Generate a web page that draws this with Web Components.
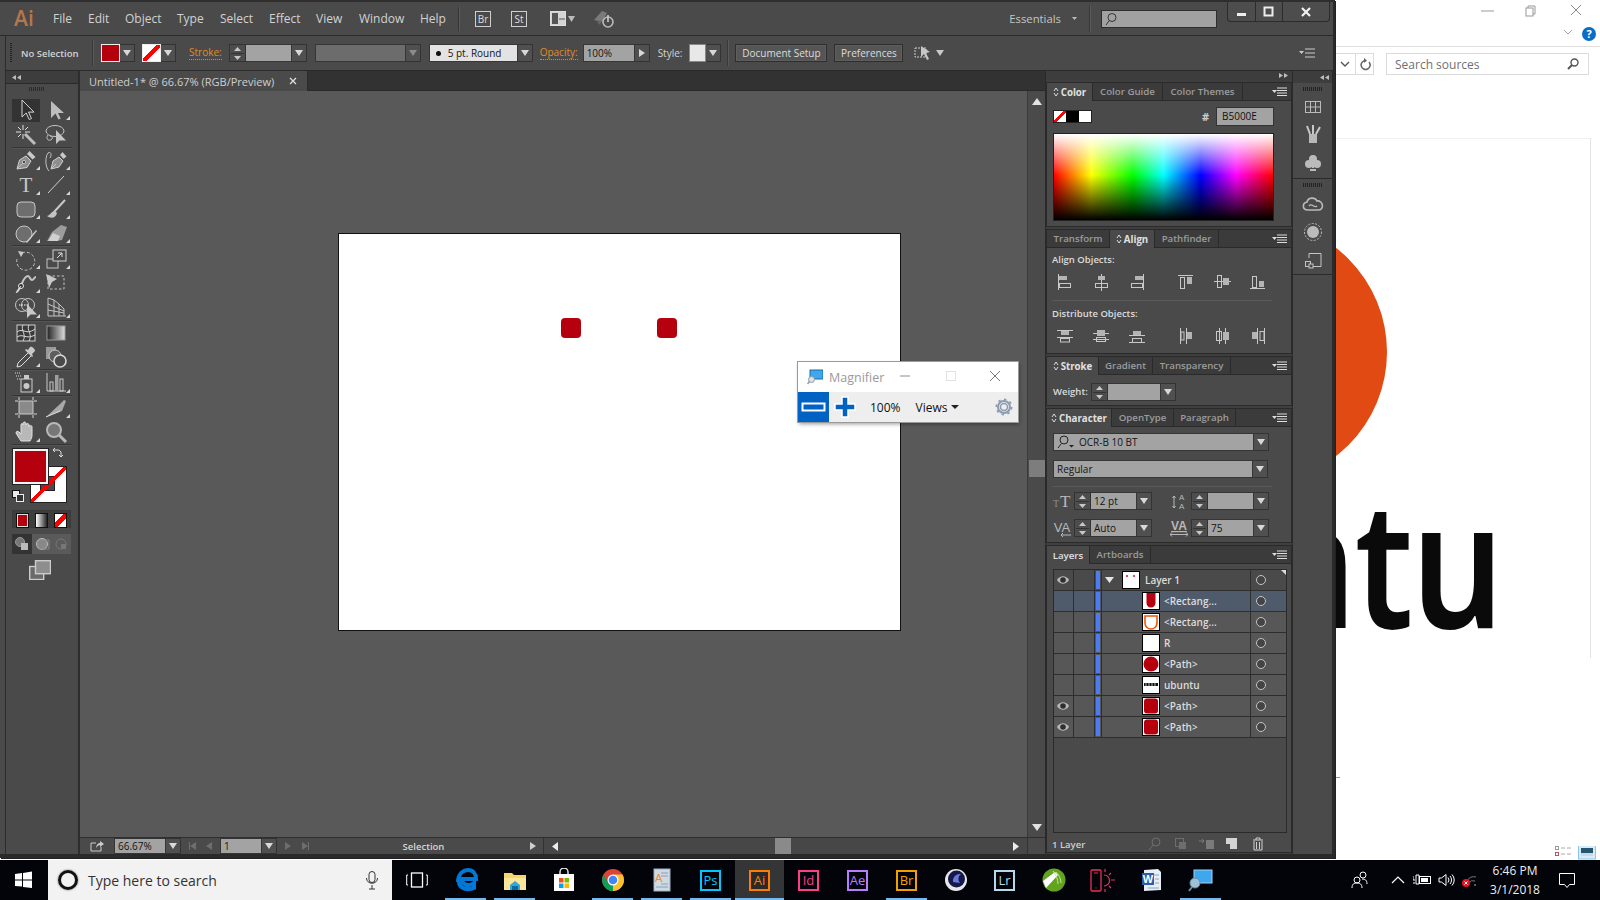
<!DOCTYPE html>
<html>
<head>
<meta charset="utf-8">
<title>Illustrator</title>
<style>
  html, body { margin: 0; height: 100%; }
  body { width: 1600px; height: 900px; overflow: hidden; display: flex; flex-direction: column; font-family: "Open Sans", "Liberation Sans", sans-serif; background: #fff; }
</style>
</head>
<body>
<desk-top>
  <browser-behind></browser-behind>
  <ai-app></ai-app>
</desk-top>
<task-bar></task-bar>

<script>
// small svg helpers
const tri = (dir, w = 8, h = 6, color = '#d8d8d8') => {
  const p = { d: `0,0 ${w},0 ${w / 2},${h}`, u: `0,${h} ${w},${h} ${w / 2},0`, r: `0,0 ${w},${h / 2} 0,${h}`, l: `${w},0 0,${h / 2} ${w},${h}` }[dir];
  return `<svg width="${w}" height="${h}" style="display:block"><polygon points="${p}" fill="${color}"/></svg>`;
};
const svg = (w, h, body, vb) => `<svg width="${w}" height="${h}" viewBox="${vb || `0 0 ${w} ${h}`}" fill="none" stroke="currentColor" stroke-width="1" style="display:block">${body}</svg>`;

const TOOLS = {
  sel: '<path d="M8 2v17l4.2-4 3 6.5 2.3-1-3-6.4H20z" fill="#2f2f2f" stroke="#d4d4d4"/>',
  dsel: '<path d="M7 3v17l4.5-4.5 3 6 2.2-1-2.7-5.5H20z" fill="#bdbdbd" stroke="none"/>',
  wand: '<path d="M11 11l10 10" stroke-width="3" stroke="#bdbdbd"/><path d="M9 2v5M9 11v5M2 9h5M11 9h5M4 4l3 3M14 4l-3 3M4 14l3-3" stroke="#e0e0e0"/>',
  lasso: '<ellipse cx="11" cy="8" rx="9" ry="5.5"/><path d="M4 12c-3 4 1 7 4 4 1-1 0-3-2-3"/><path d="M12 7v14l3.5-3.5H22z" fill="#c4c4c4" stroke="none"/>',
  pen: '<path d="M3 21l2.500-9 6.500-4 5 5-4 6.500z" fill="#8e8e8e" stroke="#cfcfcf"/><path d="M3 21l6-6"/><circle cx="10" cy="14" r="1.600" fill="#333"/><path d="M13 6l2.500-3 6 6-3 2.500z" fill="#c8c8c8" stroke="none"/>',
  curv: '<path d="M7 21l2-8 6-4 4 4-4 6z" fill="#8e8e8e" stroke="#cfcfcf"/><path d="M7 21l5-5"/><path d="M16 7l2.500-3 4 4.500-3 2.500z" fill="#c8c8c8" stroke="none"/><path d="M5 23C1 19 1 9 4 5c3-2 4 2 2 5"/>',
  type: '<text x="12" y="20" text-anchor="middle" font-family="Liberation Serif" font-size="21" fill="#c8c8c8" stroke="none">T</text>',
  line: '<path d="M4 21L20 4" stroke="#d0d0d0"/>',
  rect: '<rect x="3" y="5" width="18" height="15" rx="4" fill="#6e6e6e" stroke="#c8c8c8"/>',
  brush: '<path d="M21 3L10 15" stroke="#c8c8c8" stroke-width="2"/><path d="M11 14c-4 0-4 4-8 5 4 3 9 2 10-3z" fill="#c4c4c4" stroke="none"/>',
  shaper: '<circle cx="10" cy="13" r="8" fill="#6e6e6e" stroke="#c8c8c8"/><path d="M12 21L22 9l1 1L13 22z" fill="#c8c8c8" stroke="none"/>',
  eraser: '<path d="M3 20l5-9 9-7 6 2-5 13-6 1z" fill="#9c9c9c" stroke="none"/><path d="M9 12l7 3-2 5H4z" fill="#d0d0d0" stroke="none"/>',
  rotate: '<path d="M8 6a9 9 0 1 1-5 6" stroke-dasharray="3 2"/><path d="M4 4l6 1-3 5z" fill="#c8c8c8" stroke="none"/>',
  scale: '<rect x="3" y="12" width="11" height="9"/><rect x="9" y="3" width="13" height="11" fill="#4a4a4a" stroke="#d0d0d0"/><path d="M13 11l5-5M14 6h4v4" stroke="#e0e0e0"/>',
  width: '<path d="M3 21C9 15 8 6 14 5c2 0 2 4 4 4s2-3 4-3" stroke-width="2"/><circle cx="7" cy="15" r="2.500" fill="#333" stroke="#e8e8e8"/><path d="M2 22l5-7" stroke="#e8e8e8"/>',
  free: '<path d="M4 5h16v13H4z" stroke-dasharray="2.500 2"/><path d="M2 3l11 5-5 3 -3 6z" fill="#c8c8c8" stroke="none"/>',
  build: '<circle cx="8" cy="10" r="6.500"/><circle cx="14" cy="10" r="6.500"/><path d="M5 10h9" stroke="#fff" stroke-dasharray="1.500 1"/><path d="M13 9v14l3.500-3.500H23z" fill="#c8c8c8" stroke="none"/>',
  persp: '<path d="M4 3v18h18M4 3l6 2v16M10 5l5 4v12M15 9l5 5v7" stroke="#c4c4c4"/><path d="M4 9l16 7M4 15l16 3" stroke="#c4c4c4"/>',
  mesh: '<rect x="3" y="4" width="18" height="16" fill="#3a3a3a" stroke="#d0d0d0"/><path d="M3 11c6-5 9 4 18-3M3 16c6-4 9 3 18-2M9 4c-3 5 4 9 0 16M15 4c-3 5 4 9 0 16" stroke="#d8d8d8"/>',
  grad: '<defs><linearGradient id="g1"><stop offset="0" stop-color="#222"/><stop offset="1" stop-color="#ddd"/></linearGradient></defs><rect x="3" y="5" width="18" height="14" fill="url(#g1)" stroke="#999"/>',
  drop: '<path d="M3 22l1-4L15 7l3 3L7 21z" fill="#4a4a4a" stroke="#e0e0e0"/><path d="M14 5l2-3c2-1 5 2 5 4l-3 3 1 2-1 1-7-7 1-1z" fill="#c8c8c8" stroke="none"/>',
  blend: '<rect x="2" y="2" width="10" height="12" fill="#9a9a9a" stroke="none"/><circle cx="11" cy="11" r="6" fill="#5e5e5e" stroke="#c8c8c8"/><circle cx="16" cy="16" r="6" fill="#4a4a4a" stroke="#d8d8d8" stroke-width="1.600"/>',
  spray: '<rect x="7" y="9" width="11" height="13" fill="#4a4a4a" stroke="#d0d0d0"/><circle cx="12.500" cy="16" r="3" fill="#c8c8c8" stroke="none"/><rect x="10" y="5" width="5" height="4" fill="#c8c8c8" stroke="none"/><path d="M1 3h5M2 6h5M3 9h3" stroke-dasharray="1 1" stroke="#ddd"/>',
  graph: '<path d="M3 3v18h19" stroke="#c8c8c8"/><rect x="6" y="12" width="3" height="9" stroke="#c8c8c8"/><rect x="11" y="5" width="3.500" height="16" fill="#9e9e9e" stroke="none"/><rect x="16" y="9" width="3" height="12" stroke="#c8c8c8"/>',
  board: '<rect x="5" y="5" width="14" height="13" fill="#8a8a8a" stroke="#c8c8c8"/><path d="M1 5h3M20 5h3M1 18h3M20 18h3M5 1v3M19 1v3M5 19v3M19 19v3" stroke="#d8d8d8"/>',
  slice: '<path d="M2 21L15 9l5-5 2 1-4 10z" fill="#a8a8a8" stroke="none"/><path d="M2 21l14-6" stroke="#d8d8d8"/>',
  hand: '<path d="M7 21c-2-3-4-6-5-8 0-2 2-2 3-1l2 2V5c0-2 2-2 2 0V3.500c0-2 3-2 3 0V5c0-2 3-2 3 0v2c0-2 3-2 3 0v8c0 3-1 4-2 6z" fill="#b8b8b8" stroke="#e0e0e0"/>',
  zoom: '<circle cx="10" cy="10" r="7" fill="#777" stroke="#b8b8b8" stroke-width="2"/><path d="M15 15l7 7" stroke="#b8b8b8" stroke-width="3"/>'
};

class Comp extends HTMLElement {
  connectedCallback() {
    if (this.shadowRoot) return;
    this.attachShadow({ mode: 'open' });
    this.shadowRoot.innerHTML = this.render();
  }
}

class DeskTop extends Comp {
  render() {
    return `<style>:host{display:block;position:relative;height:860px;overflow:hidden}</style><slot></slot>`;
  }
}

class BrowserBehind extends Comp {
  render() {
    return `<style>
      :host{position:absolute;inset:0;display:block;background:#fff;overflow:hidden;color:#6a6a6a}
      .circle{position:absolute;left:1123px;top:220px;width:264px;height:264px;border-radius:50%;background:#e24a14}
      .clip{position:absolute;left:1335px;right:98px;top:441px;height:239px;overflow:hidden;display:flex;justify-content:flex-end}
      .word{flex:none;font:600 176px/1.36 "Noto Sans",sans-serif;color:#0a0a0a;letter-spacing:-2px;transform:scaleX(.82);transform-origin:right center}
      .top{position:absolute;left:1335px;right:0;top:0;height:46px;border-bottom:1px solid #e0e0e0}
      .wb{position:absolute;top:3px}
      .addr{position:absolute;left:1335px;top:53px;width:38px;height:20px;border:1px solid #dcdcdc;border-left:0;display:flex}
      .addr div{flex:1;display:flex;align-items:center;justify-content:center}
      .addr div+div{width:17px;flex:none;border-left:1px solid #dcdcdc}
      .search{position:absolute;left:1386px;top:53px;height:20px;border:1px solid #dcdcdc;display:flex;align-items:center;justify-content:space-between;padding:0 8px;box-sizing:content-box;width:185px;font:12px "Open Sans",sans-serif;color:#707070}
      .vl{position:absolute;left:1590px;top:138px;height:520px;width:1px;background:#e4e4e4}
      .hl{position:absolute;left:1335px;top:138px;width:255px;height:1px;background:#f1f1f1}
      .mk{position:absolute;left:1336px;top:777px;width:4px;height:1px;background:#999}
      .views{position:absolute;left:1555px;top:846px;display:flex;gap:7px;align-items:flex-start}
    </style>
    <div class="circle"></div>
    <div class="clip"><div class="word">ntu</div></div>
    <div class="top">
      <div class="wb" style="left:143px">${svg(16, 16, '<path d="M3 8h13" stroke="#999"/>')}</div>
      <div class="wb" style="left:187px">${svg(16, 16, '<rect x="4" y="5" width="7" height="8" stroke="#999"/><path d="M6 5V3h7v8h-2" stroke="#999"/>')}</div>
      <div class="wb" style="left:233px">${svg(16, 16, '<path d="M3 2l10 10M13 2L3 12" stroke="#888"/>')}</div>
      <div class="wb" style="left:226px;top:28px">${svg(14, 10, '<path d="M3 2l4 4 4-4" stroke="#aaa"/>')}</div>
      <div class="wb" style="left:247px;top:27px;width:14px;height:14px;border-radius:50%;background:#0a6cc4;color:#fff;font:bold 11px/14px 'Open Sans',sans-serif;text-align:center">?</div>
    </div>
    <div class="addr"><div>${svg(12, 8, '<path d="M2 2l4 4 4-4" stroke="#555" stroke-width="1.400"/>')}</div><div>${svg(14, 14, '<path d="M11 5a4.500 4.500 0 1 1-3-1.500" stroke="#666" stroke-width="1.500"/><path d="M6 1l3 2.500L6 6z" fill="#666" stroke="none"/>')}</div></div>
    <div class="search"><span>Search sources</span>${svg(14, 14, '<circle cx="8.500" cy="5.500" r="3.500" stroke="#555" stroke-width="1.400"/><path d="M6 8l-4 4" stroke="#555" stroke-width="2"/>')}</div>
    <div class="hl"></div><div class="vl"></div><div class="mk"></div>
    <div class="views">${svg(16, 10, '<rect x="0.500" y="0.500" width="3" height="3" stroke="#999"/><rect x="0.500" y="6.500" width="3" height="3" stroke="#b55"/><path d="M6 2h4M12 2h4M6 8h4M12 8h4" stroke="#aaa"/>')}
      <svg width="18" height="14" style="display:block"><rect x="0.500" y="-4" width="17" height="17" fill="#d6ecfa" stroke="#8ac6ec"/><rect x="3" y="2" width="12" height="8" fill="#25566f"/><rect x="3" y="7" width="12" height="3" fill="#cfd8df"/></svg></div>`;
  }
}

class AiApp extends Comp {
  render() {
    return `<style>
      :host{position:absolute;left:0;top:0;width:1335px;height:858px;display:flex;flex-direction:column;background:#4a4a4a;box-sizing:border-box;border-top:2px solid #2e2e2e;border-right:2px solid #2a2a2a;border-bottom:4px solid #2a2a2a;box-shadow:1px 1px 0 #222;color:#d6d6d6;font-size:11px}
      .main{flex:1;min-height:0;display:flex;margin-left:5px;border-left:1px solid #2c2c2c;border-top:1px solid #2a2a2a}
    </style>
    <menu-bar></menu-bar>
    <control-bar></control-bar>
    <div class="main">
      <tool-dock></tool-dock>
      <doc-area></doc-area>
      <panel-dock></panel-dock>
      <icon-dock></icon-dock>
    </div>`;
  }
}

class MenuBar extends Comp {
  render() {
    const items = ['File', 'Edit', 'Object', 'Type', 'Select', 'Effect', 'View', 'Window', 'Help'];
    // column widths come from the reference's label positions
    return `<style>
      :host{display:flex;align-items:center;height:34px;box-sizing:border-box;flex:none;border-bottom:1px solid #2a2a2a;font-size:12px;color:#d2d2d2;padding-left:14px}
      .logo{width:39px;font:600 21px/1 "Open Sans",sans-serif;color:#b4764d}
      nav{display:grid;grid-template-columns:35px 37px 52px 43px 49px 47px 43px 61px 39px}
      .sep{width:1px;height:24px;background:#363636;border-right:1px solid #5a5a5a;margin:0 15px 0 0}
      .bx{width:16px;height:16px;border:1px solid #cfcfcf;box-sizing:border-box;font:10px/14px "Open Sans",sans-serif;text-align:center;color:#ddd;margin-right:20px}
      .ess{margin-left:auto;display:flex;align-items:center;font-size:11.300px;color:#c4c4c4}
      .vs{width:1px;height:26px;background:#383838;border-right:1px solid #5a5a5a}
      .search{width:116px;height:18px;box-sizing:border-box;background:#a1a1a1;border:1px solid #2e2e2e;margin:0 10px 0 10px;padding:1px 0 0 2px;color:#333}
      .win{display:flex;align-self:flex-start;height:19px;margin-right:3px;margin-top:0;border:1px solid #2c2c2c;border-top:0;border-radius:0 0 4px 4px;background:#4d4d4d}
      .win div{display:flex;align-items:center;justify-content:center;border-left:1px solid #2c2c2c;color:#eee}
    </style>
    <div class="logo">Ai</div>
    <nav>${items.map(i => `<span>${i}</span>`).join('')}</nav>
    <div class="sep" style="margin-left:-1px"></div>
    <div class="bx">Br</div><div class="bx">St</div>
    <div style="display:flex;align-items:center;gap:2px;margin:0 17px 0 3px">
      ${svg(16, 15, '<rect x="0.500" y="0.500" width="15" height="14" fill="#d4d4d4" stroke="#ddd"/><rect x="2" y="2" width="6" height="11" fill="#555" stroke="none"/><path d="M9 8h6" stroke="#555"/>')}
      ${tri('d', 7, 6, '#bbb')}
    </div>
    ${svg(24, 20, '<path d="M2 11l8-9 5 2-5 9z" fill="#7a7a7a" stroke="none"/><path d="M5 13l5-2-2 5z" fill="#666" stroke="none"/><circle cx="16" cy="13" r="5" stroke="#bbb" stroke-width="1.600"/><path d="M16 6v7" stroke="#ccc" stroke-width="1.600"/>')}
    <div class="ess"><span style="margin-right:11px">Essentials</span>${tri('d', 5, 3, '#bbb')}<span style="width:12px"></span></div>
    <div class="vs"></div>
    <div class="search">${svg(14, 14, '<circle cx="8" cy="5.500" r="4"/><path d="M5 9l-3 4"/>')}</div>
    <div class="win">
      <div style="width:27px;border-left:0">${svg(12, 12, '<rect x="1" y="7" width="9" height="3" fill="#eee" stroke="none"/>')}</div>
      <div style="width:26px">${svg(12, 12, '<rect x="1.500" y="1.500" width="8" height="8" stroke="#eee" stroke-width="2"/>')}</div>
      <div style="width:46px">${svg(12, 12, '<path d="M2 2l8 8M10 2l-8 8" stroke="#f2f2f2" stroke-width="2.200"/>')}</div>
    </div>`;
  }
}

class AiField extends Comp {
  render() {
    const a = n => this.getAttribute(n);
    const has = n => this.hasAttribute(n);
    const fw = a('fw') || 46;
    const dis = has('disabled');
    const arrow = a('arrow') || 'd';
    return `<style>
      :host{display:inline-flex;height:18px;flex:none;box-sizing:border-box;font-size:10px;color:#141414;vertical-align:top}
      .spin{width:17px;box-sizing:border-box;border:1px solid #333;background:#4d4d4d;display:flex;flex-direction:column;align-items:center;justify-content:center;gap:2px}
      .spin i{display:block;height:1px;width:13px;background:#333;margin:0}
      .f{width:${fw}px;box-sizing:border-box;background:${dis ? '#6c6c6c' : has('light') ? '#e3e3e3' : '#a3a3a3'};border:1px solid #363636;border-width:${has('spin') ? '1px 1px 1px 0' : '1px'};padding-left:3px;line-height:16px;white-space:nowrap;overflow:hidden;display:flex;align-items:center}
      .d{width:15px;box-sizing:border-box;background:#505050;border:1px solid #333;border-left:0;display:flex;align-items:center;justify-content:center}
    </style>
    ${has('spin') ? `<div class="spin">${tri('u', 7, 4, '#c8c8c8')}<i></i>${tri('d', 7, 4, '#c8c8c8')}</div>` : ''}
    <div class="f"><slot></slot></div>
    ${has('nodrop') ? '' : `<div class="d">${tri(arrow === 'r' ? 'r' : 'd', arrow === 'r' ? 6 : 8, arrow === 'r' ? 8 : 6, dis ? '#8c8c8c' : '#d8d8d8')}</div>`}`;
  }
}

class ControlBar extends Comp {
  render() {
    return `<style>
      :host{display:flex;align-items:center;height:34px;flex:none;margin-left:5px;border-left:1px solid #2c2c2c;box-sizing:border-box;font-size:10px;color:#d4d4d4}
      .grip{width:2px;height:20px;margin:0 9px 0 4px;background:repeating-linear-gradient(#222 0 1px,transparent 1px 2px)}
      .sep{width:1px;height:26px;background:#393939;border-right:1px solid #5a5a5a}
      .sw{display:flex;height:18px;flex:none}
      .sw .c{width:19px;box-sizing:border-box;border:1px solid #eee;background:#b5000e;outline:0}
      .sw .d{width:15px;background:#505050;border:1px solid #333;border-left:0;box-sizing:border-box;display:flex;align-items:center;justify-content:center}
      .lab{color:#e08a2c;border-bottom:1px dotted #e08a2c;line-height:13px;flex:none}
      button{all:unset;box-sizing:border-box;height:18px;flex:none;text-align:center;background:#555;border:1px solid #2e2e2e;box-shadow:inset 0 0 0 1px #5e5e5e;font-size:10px;line-height:16px;color:#dcdcdc}
      .m{margin-left:auto;margin-right:18px}
    </style>
    <div class="grip"></div>
    <span style="width:71px;font-weight:600;font-size:9.500px">No Selection</span>
    <div class="sep"></div>
    <div class="sw" style="margin-left:7px"><div class="c"></div><div class="d">${tri('d', 8, 6)}</div></div>
    <div class="sw" style="margin-left:7px"><div class="c" style="background:linear-gradient(135deg,#fff 0 42%,#f00 42% 58%,#fff 58%)"></div><div class="d">${tri('d', 8, 6)}</div></div>
    <span class="lab" style="margin:0 7px 0 13px">Stroke:</span>
    <ai-field spin fw="46"></ai-field>
    <ai-field disabled fw="91" style="margin-left:8px"></ai-field>
    <ai-field light fw="89" style="margin-left:8px"><span style="width:5px;height:5px;border-radius:50%;background:#111;margin:0 7px 0 3px"></span>5 pt. Round</ai-field>
    <span class="lab" style="margin:0 5px 0 7px">Opacity:</span>
    <ai-field fw="52" arrow="r">100%</ai-field>
    <span style="margin:0 7px 0 8px">Style:</span>
    <div class="sw"><div class="c" style="width:17px;background:#e8e8e8;border-color:#888"></div><div class="d">${tri('d', 8, 6)}</div></div>
    <div class="sep" style="margin:0 6px"></div>
    <button style="width:92px">Document Setup</button>
    <button style="width:69px;margin-left:7px">Preferences</button>
    <div style="margin-left:11px;display:flex;align-items:center;gap:4px">
      ${svg(18, 16, '<rect x="1" y="3" width="11" height="9" stroke-dasharray="2 1" stroke="#ccc"/><path d="M7 1l9 6-4 1 3 6-2 1-3-6-3 3z" fill="#c6c6c6" stroke="none"/>')}
      ${tri('d', 8, 6, '#c8c8c8')}
    </div>
    <div class="m">${svg(16, 10, '<path d="M6 1h10M6 5h10M6 9h10" stroke="#ccc"/><path d="M0 3h5L2.500 6z" fill="#ccc" stroke="none"/>')}</div>`;
  }
}

class ToolBtn extends Comp {
  render() {
    const n = this.getAttribute('n');
    return `<style>
      :host{position:relative;display:flex;width:30px;height:24.400px;align-items:center;justify-content:center;color:#c4c4c4}
      :host([on]) .box{background:#333}
      .box{width:28px;height:23px;display:flex;align-items:center;justify-content:center}
      .c{position:absolute;right:1px;bottom:2px}
    </style>
    <div class="box">${svg(24, 24, TOOLS[n])}</div>
    ${this.hasAttribute('m') ? `<div class="c">${svg(4, 4, '<polygon points="4,0 4,4 0,4" fill="#d8d8d8" stroke="none"/>')}</div>` : ''}`;
  }
}

class ToolDock extends Comp {
  render() {
    const grp = (rows) => `<div class="g">${rows.map(r => `<tool-btn n="${r}"></tool-btn>`.replace(/n="([a-z]+)(\*?)(\+?)"/, (m, a, b, c) => `n="${a}"${b ? ' m' : ''}${c ? ' on' : ''}`)).join('')}</div>`;
    return `<style>
      :host{display:flex;flex-direction:column;width:72px;flex:none;border-right:2px solid #2d2d2d;box-sizing:content-box}
      .hd{height:12px;background:#3d3d3d;border-bottom:1px solid #2a2a2a;padding-left:6px;display:flex;align-items:center;gap:1px;flex:none}
      .grip{height:4px;width:16px;margin:3px 0 7px 23px;background:repeating-linear-gradient(90deg,#2a2a2a 0 1px,transparent 1px 2px);flex:none}
      .g{display:grid;grid-template-columns:30px 30px;padding-left:5px;flex:none}
      hr{border:0;height:1px;margin:0 4px 0 6px;background:#363636;flex:none;box-shadow:0 1px 0 #555;width:60px}
      .fs{position:relative;height:54px;margin:4px 0 0 7px;width:60px;flex:none}
      .fill{position:absolute;left:0;top:0;width:35px;height:35px;box-sizing:border-box;background:#b5000e;border:2px solid #f4f4f4;outline:1px solid #222;z-index:1}
      .stroke{position:absolute;left:18px;top:18px;width:35px;height:35px;box-sizing:border-box;background:linear-gradient(135deg,transparent 0 47%,#f00 47% 53%,transparent 53%),#fff;outline:1px solid #222}
      .stroke i{position:absolute;left:10px;top:10px;width:13px;height:13px;background:#4a4a4a;outline:1px solid #222}
      .stroke b{position:absolute;inset:0;background:linear-gradient(135deg,transparent 0 47%,#f00 47% 53%,transparent 53%)}
      .sw{position:absolute;left:38px;top:-2px;color:#ddd}
      .df{position:absolute;left:-1px;top:41px}
      .modes{display:flex;margin:7px 0 0 6px;width:59px;height:18px;background:#3d3d3d;flex:none;gap:6px;padding:2px 3px;box-sizing:border-box;border:1px solid #3a3a3a}
      .modes i{display:block;width:13px;height:13px;border:1px solid #111;box-sizing:content-box}
      .draw{display:flex;margin:6px 0 0 6px;width:59px;height:20px;flex:none;background:#5a5a5a}
      .draw div{flex:1;display:flex;align-items:center;justify-content:center}
      .scr{margin:6px 0 0 23px;flex:none}
    </style>
    <div class="hd">${tri('l', 4, 5, '#bdbdbd')}${tri('l', 4, 5, '#bdbdbd')}</div>
    <div class="grip"></div>
    ${grp(['sel+', 'dsel*', 'wand', 'lasso'])}<hr>
    ${grp(['pen*', 'curv*', 'type*', 'line*', 'rect*', 'brush*', 'shaper*', 'eraser*'])}<hr>
    ${grp(['rotate*', 'scale*', 'width*', 'free', 'build*', 'persp*'])}<hr>
    ${grp(['mesh', 'grad', 'drop*', 'blend'])}<hr>
    ${grp(['spray*', 'graph*'])}<hr>
    ${grp(['board', 'slice*', 'hand*', 'zoom'])}<hr>
    <div class="fs">
      <div class="stroke"><i></i><b></b></div>
      <div class="fill"></div>
      <div class="sw">${svg(12, 12, '<path d="M2 3h6l2 2v5M2 3l2-2M2 3l2 2M10 10l-2-2M10 10l2-2" stroke="#ddd"/>')}</div>
      <div class="df">${svg(12, 12, '<rect x="0.500" y="0.500" width="7" height="7" fill="#e8e8e8" stroke="#111"/><rect x="4.500" y="4.500" width="7" height="7" fill="#333" stroke="#eee"/>')}</div>
    </div>
    <div class="modes"><i style="background:#b5000e;outline:1px solid #ddd;outline-offset:-2px"></i><i style="background:linear-gradient(90deg,#fff,#222)"></i><i style="background:linear-gradient(135deg,#fff 0 35%,#f00 35% 65%,#fff 65%)"></i></div>
    <div class="draw">
      <div style="background:#333">${svg(16, 16, '<circle cx="6" cy="6" r="4.500" stroke="#999" fill="#777"/><rect x="7" y="7" width="7" height="7" fill="#bbb" stroke="none"/>')}</div>
      <div>${svg(16, 16, '<circle cx="8" cy="8" r="5.500" stroke="#bbb" fill="#888"/><path d="M11 4h4v9h-9v-2" stroke="#888"/>')}</div>
      <div>${svg(16, 16, '<circle cx="8" cy="8" r="5" stroke="#777"/><rect x="8" y="8" width="5" height="5" fill="#777" stroke="none"/>')}</div>
    </div>
    <div class="scr">${svg(22, 20, '<rect x="0.700" y="6.500" width="14" height="13" stroke="#ccc" stroke-width="1.400" fill="#6a6a6a"/><rect x="6.500" y="0.700" width="15" height="13" stroke="#ccc" stroke-width="1.400" fill="#8e8e8e"/>')}</div>`;
  }
}

class DocArea extends Comp {
  render() {
    return `<style>
      :host{flex:1;min-width:0;display:flex;flex-direction:column;border-right:1px solid #2a2a2a}
      .tabs{height:19px;flex:none;background:#323232;display:flex;border-bottom:1px solid #2a2a2a}
      .tab{width:228px;box-sizing:border-box;background:#4a4a4a;display:flex;align-items:center;padding:0 10px 0 9px;justify-content:space-between;font-size:11px;font-weight:500;color:#cfcfcf;border-right:1px solid #2a2a2a;height:20px}
      .mid{flex:1;min-height:0;display:flex}
      .vs{width:17px;flex:none;border-left:1px solid #3a3a3a;background:#4a4a4a;display:flex;flex-direction:column;align-items:center;justify-content:space-between;padding:7px 0 6px}
      .thumb{position:absolute;right:0;top:369px;width:16px;height:17px;background:#7d7d7d}
      .st{height:16px;flex:none;border-top:1px solid #2e2e2e;display:flex;align-items:center;background:#4a4a4a;font-size:10px}
      .st ai-field{height:16px}
      .nav{display:flex;align-items:center;justify-content:center;gap:3px}
      .sel{width:213px;flex:none;text-align:center;color:#d6d6d6;font-size:9.500px;font-weight:600}
      .hs{flex:1;margin:0 17px 0 7px;height:100%;position:relative;background:#474747;border-left:1px solid #333;border-right:1px solid #333;display:flex;align-items:center;justify-content:space-between;padding:0 8px 0 8px;box-sizing:border-box}
      .ht{position:absolute;left:231px;top:0;bottom:0;width:16px;background:#8a8a8a}
    </style>
    <div class="tabs"><div class="tab"><span>Untitled-1* @ 66.67% (RGB/Preview)</span>${svg(8, 8, '<path d="M1 1l6 6M7 1L1 7" stroke="#ddd" stroke-width="1.300"/>')}</div></div>
    <div class="mid">
      <art-canvas></art-canvas>
      <div class="vs" style="position:relative">${tri('u', 10, 7, '#e2e2e2')}<div class="thumb"></div>${tri('d', 10, 7, '#e2e2e2')}</div>
    </div>
    <div class="st">
      <div style="width:34px;display:flex;justify-content:center">${svg(14, 12, '<path d="M1 3h5M1 3v8h10V7" stroke="#ccc"/><path d="M6 8c0-3 2-5 4-5V1l4 3-4 3V5c-1 0-3 1-4 3z" fill="#ccc" stroke="none"/>')}</div>
      <ai-field fw="52">66.67%</ai-field>
      <div class="nav" style="width:39px;gap:2px">${svg(7, 8, '<path d="M0.500 0v8" stroke="#6e6e6e"/><polygon points="7,0 1,4 7,8" fill="#6e6e6e" stroke="none"/>')}<span style="width:6px"></span>${tri('l', 6, 8, '#6e6e6e')}</div>
      <ai-field fw="42">1</ai-field>
      <div class="nav" style="width:40px">${tri('r', 6, 8, '#6e6e6e')}<span style="width:5px"></span>${svg(7, 8, '<path d="M6.500 0v8" stroke="#6e6e6e"/><polygon points="0,0 6,4 0,8" fill="#6e6e6e" stroke="none"/>')}</div>
      <div class="sel">Selection</div>
      ${tri('r', 6, 8, '#d0d0d0')}
      <div class="hs">${tri('l', 6, 9, '#ececec')}<div class="ht"></div>${tri('r', 6, 9, '#ececec')}</div>
    </div>`;
  }
}

class ArtCanvas extends Comp {
  render() {
    return `<style>
      :host{flex:1;min-width:0;position:relative;display:block;background:#595959;overflow:hidden}
      .board{position:absolute;left:259px;top:143px;width:561px;height:396px;background:#fff;outline:1px solid #111}
      .dot{position:absolute;top:84px;width:20px;height:20px;border-radius:4px;background:#b5000e}
    </style>
    <div class="board"><div class="dot" style="left:222px"></div><div class="dot" style="left:318px"></div></div>
    <mag-window></mag-window>`;
  }
}

class MagWindow extends Comp {
  render() {
    return `<style>
      :host{position:absolute;left:718px;top:271px;width:220px;height:60px;background:#fff;box-shadow:0 0 0 1px #9a9a9a,1px 2px 4px rgba(0,0,0,.4);display:flex;flex-direction:column;z-index:5;font-size:12px;color:#111;font-family:"Open Sans",sans-serif}
      .title{height:30px;flex:none;display:flex;align-items:center;color:#9a9a9a;font-size:12.500px}
      .title .b{position:absolute;top:7px}
      .bar{flex:1;background:#eee;display:flex;align-items:center;position:relative}
      .minus{width:31px;height:100%;background:#0063c4;display:flex;align-items:center;justify-content:center}
    </style>
    <div class="title">
      <span style="margin:0 6px 0 9px">${svg(16, 16, '<rect x="3" y="1" width="13" height="9" fill="#3fa7ee" stroke="#1d6da6"/><circle cx="4.500" cy="10.500" r="3" stroke="#8d9aa3" fill="#d8e4ec"/><path d="M2.500 12.500L0.500 15" stroke="#8d9aa3" stroke-width="1.500"/>')}</span>
      <span>Magnifier</span>
      <div class="b" style="left:100px">${svg(14, 14, '<path d="M2 7h10" stroke="#8c8c8c"/>')}</div>
      <div class="b" style="left:146px">${svg(14, 14, '<rect x="2.500" y="2.500" width="9" height="9" stroke="#e2e2e2"/>')}</div>
      <div class="b" style="left:190px">${svg(14, 14, '<path d="M2 2l10 10M12 2L2 12" stroke="#777"/>')}</div>
    </div>
    <div class="bar">
      <div class="minus">${svg(25, 10, '<rect x="1.500" y="1.500" width="22" height="7" fill="#0063c4" stroke="#fff" stroke-width="2"/>')}</div>
      <span style="margin:0 0 0 4px;display:block">${svg(24, 24, '<path d="M9 2h6v7h7v6h-7v7H9v-7H2V9h7z" fill="#0063c4" stroke="#fff" stroke-width="1.500"/>')}</span>
      <span style="margin-left:13px">100%</span>
      <span style="margin-left:15px">Views</span>
      <span style="margin-left:4px">${tri('d', 8, 4, '#222')}</span>
      <span style="margin-left:auto;margin-right:5px">${svg(18, 18, '<circle cx="9" cy="9" r="3.500" stroke="#8a9bb0" stroke-width="1.500"/><circle cx="9" cy="9" r="6" stroke="#8a9bb0" stroke-width="2"/><circle cx="9" cy="9" r="7.700" stroke="#8a9bb0" stroke-width="1.600" stroke-dasharray="2.500 3.500"/>')}</span>
    </div>`;
  }
}

class AiPanel extends Comp {
  render() {
    const tabs = this.getAttribute('tabs').split('|');
    const widths = this.getAttribute('widths').split(',');
    const act = +(this.getAttribute('active') || 0);
    const noArrow = this.hasAttribute('noarrow');
    return `<style>
      :host{display:block;flex:none;border:1px solid #2a2a2a;margin-top:2px;background:#4a4a4a;height:${this.getAttribute('h')}px;box-sizing:border-box;position:relative}
      .tabs{height:17px;display:flex;background:#3b3b3b;border-bottom:1px solid #2a2a2a;font-size:9.700px}
      .t{box-sizing:border-box;display:flex;align-items:center;justify-content:center;color:#9c9c9c;border-right:1px solid #2a2a2a;font-weight:600;white-space:nowrap;gap:2px}
      .t.a{background:#4a4a4a;color:#e0e0e0;height:18px;font-weight:${noArrow ? 600 : 700}}
      .menu{margin-left:auto;margin-right:4px;align-self:center}
    </style>
    <div class="tabs">
      ${tabs.map((t, i) => `<div class="t${i === act ? ' a' : ''}" style="width:${widths[i]}px">${i === act && !noArrow ? svg(6, 10, '<path d="M1 4l2-3 2 3M1 6l2 3 2-3" stroke="#ddd"/>') : ''}${t}</div>`).join('')}
      <div class="menu">${svg(15, 9, '<path d="M5 1h10M5 3.500h10M5 6h10M5 8.500h10" stroke="#ddd"/><path d="M0 3h5L2.500 6z" fill="#ddd" stroke="none"/>')}</div>
    </div>
    <div><slot></slot></div>`;
  }
}

class AlignRow extends Comp {
  render() {
    const L = 'stroke="#c8c8c8"', F = 'fill="#b4b4b4" stroke="none"';
    const sets = {
      align: [
        `<path d="M2.500 1v16" ${L}/><rect x="3" y="3" width="8" height="4" ${F}/><rect x="3.500" y="10.500" width="11" height="4" ${L}/>`,
        `<path d="M9.500 1v17" ${L}/><rect x="6" y="3" width="7" height="4" ${F}/><rect x="3.500" y="10.500" width="12" height="4" ${L}/>`,
        `<path d="M15.500 1v16" ${L}/><rect x="7" y="3" width="8" height="4" ${F}/><rect x="3.500" y="10.500" width="11" height="4" ${L}/>`,
        `<path d="M1 2.500h15" ${L}/><rect x="3.500" y="4.500" width="4" height="11" ${L}/><rect x="10" y="4" width="5" height="7" ${F}/>`,
        `<path d="M1 8.500h17" ${L}/><rect x="4.500" y="2.500" width="4" height="12" ${L}/><rect x="10" y="5" width="6" height="7" ${F}/>`,
        `<path d="M1 15.500h15" ${L}/><rect x="3.500" y="3.500" width="4" height="11" ${L}/><rect x="10" y="8" width="5" height="6" ${F}/>`
      ],
      dist: [
        `<path d="M1 3.500h16M1 10.500h16" ${L}/><rect x="5" y="4" width="8" height="4" ${F}/><rect x="4.500" y="11.500" width="9" height="3.500" ${L}/>`,
        `<path d="M1 6.500h16M1 12.500h16" ${L}/><rect x="5" y="3" width="8" height="6" ${F}/><rect x="4.500" y="10.500" width="9" height="4" ${L}/>`,
        `<path d="M1 8.500h16M1 15.500h16" ${L}/><rect x="5" y="4" width="8" height="4" ${F}/><rect x="4.500" y="11.500" width="9" height="4" ${L}/>`,
        `<path d="M3.500 1v16M9.500 1v16" ${L}/><rect x="4" y="5" width="3" height="8" ${L}/><rect x="10" y="5" width="5" height="7" ${F}/>`,
        `<path d="M6.500 1v16M12.500 1v16" ${L}/><rect x="3.500" y="4.500" width="5" height="9" ${L}/><rect x="10" y="5" width="6" height="8" ${F}/>`,
        `<path d="M8.500 1v16M15.500 1v16" ${L}/><rect x="3" y="5" width="5" height="7" ${F}/><rect x="11" y="4.500" width="4" height="9" ${L}/>`
      ]
    }[this.getAttribute('set')];
    return `<style>
      :host{display:grid;grid-template-columns:36px 36px 49px 36px 36px 36px;padding-left:9px;height:20px;align-items:center}
    </style>${sets.map(s => `<div>${svg(18, 18, s)}</div>`).join('')}`;
  }
}

class PanelDock extends Comp {
  render() {
    const spinDrop = (val, fw) => `<ai-field spin fw="${fw}">${val}</ai-field>`;
    return `<style>
      :host{width:246px;flex:none;display:flex;flex-direction:column;border-right:1px solid #2a2a2a;background:#3f3f3f;font-size:9.500px}
      .hd{height:9px;background:#3d3d3d;display:flex;justify-content:flex-end;align-items:center;gap:1px;padding-right:4px;flex:none}
      .sw{display:flex;border:1px solid #222;width:39px;height:13px;box-sizing:border-box}
      .sw i{flex:1}
      .cr{display:flex;align-items:center;justify-content:space-between;padding:6px 17px 0 6px}
      .hex{width:58px;height:19px;box-sizing:border-box;background:#a3a3a3;border:1px solid #333;color:#111;line-height:17px;padding-left:5px;font-size:10px}
      .spec{height:86px;margin:7px 17px 0 6px;border:1px solid #222;position:relative;background:linear-gradient(to bottom,#fff 0,rgba(255,255,255,0) 48%,rgba(0,0,0,0) 48%,#000 100%),linear-gradient(to right,#f00 0,#ff0 17%,#0f0 36%,#0ff 50%,#00f 67%,#f0f 83%,#f00 100%)}
      .lb{font-weight:600;padding:0 0 0 5px;line-height:14px;color:#dcdcdc}
      .sep{height:1px;background:#5a5a5a;margin:0 19px 0 5px}
      .ln{display:flex;align-items:center}
      .layers{margin:5px 4px 0 6px;height:264px;border:1px solid #2a2a2a;box-sizing:border-box;background:#4a4a4a}
      .ft{display:flex;align-items:center;height:20px;padding:0 0 0 5px;font-weight:600;color:#cfcfcf}
    </style>
    <div class="hd">${tri('r', 4, 5, '#bdbdbd')}${tri('r', 4, 5, '#bdbdbd')}</div>
    <ai-panel h="145" tabs="Color|Color Guide|Color Themes" widths="46,70,80">
      <div class="cr">
        <div class="sw"><i style="background:linear-gradient(135deg,#fff 0 40%,#f00 40% 60%,#fff 60%)"></i><i style="background:#000"></i><i style="background:#fff"></i></div>
        <div style="display:flex;align-items:center;gap:7px"><b style="font-size:11px;color:#ccc">#</b><div class="hex">B5000E</div></div>
      </div>
      <div class="spec"></div>
    </ai-panel>
    <ai-panel h="125" tabs="Transform|Align|Pathfinder" widths="63,45,64" active="1">
      <div class="lb" style="margin-top:5px">Align Objects:</div>
      <align-row set="align" style="margin-top:5px"></align-row>
      <div class="sep" style="margin-top:8px"></div>
      <div class="lb" style="margin-top:6px">Distribute Objects:</div>
      <align-row set="dist" style="margin-top:5px"></align-row>
    </ai-panel>
    <ai-panel h="50" tabs="Stroke|Gradient|Transparency" widths="52,54,78">
      <div class="ln" style="padding:8px 0 0 6px"><span class="lb" style="padding:0;width:38px">Weight:</span><ai-field spin fw="53"></ai-field></div>
    </ai-panel>
    <ai-panel h="135" tabs="Character|OpenType|Paragraph" widths="65,62,62">
      <ai-field fw="201" style="margin:6px 0 0 6px;display:flex"><span style="display:flex;align-items:center;color:#222;margin-right:4px">${svg(18, 14, '<circle cx="7" cy="5" r="4"/><path d="M4 9l-3 4"/><path d="M12 10h5l-2.500 2.500z" fill="#222" stroke="none"/>')}</span>OCR-B 10 BT</ai-field>
      <ai-field fw="200" style="margin:9px 0 0 6px;display:flex">Regular</ai-field>
      <div class="sep" style="margin-top:8px"></div>
      <div style="display:grid;grid-template-columns:117px auto;row-gap:9px;margin:5px 0 0 6px;width:224px">
        <div class="ln"><span style="width:21px">${svg(18, 18, '<text x="0" y="15" font-family="Liberation Serif" font-size="10" fill="#8c8c8c" stroke="none">T</text><text x="7" y="15" font-family="Liberation Serif" font-size="17" fill="#b8b8b8" stroke="none">T</text>')}</span>${spinDrop('12 pt', 46)}</div>
        <div class="ln"><span style="width:21px">${svg(18, 18, '<text x="9" y="7.500" font-family="Liberation Sans" font-size="8" fill="#b8b8b8" stroke="none">A</text><text x="9" y="16.500" font-family="Liberation Sans" font-size="8" fill="#b8b8b8" stroke="none">A</text><path d="M4 4v12M2.500 6L4 4l1.500 2M2.500 14L4 16l1.500-2" stroke="#b8b8b8"/>')}</span>${spinDrop('', 46)}</div>
        <div class="ln"><span style="width:21px"><svg width="18" height="18" style="display:block"><text x="9" y="13" text-anchor="middle" font-family="Liberation Sans" font-size="13" fill="#b8b8b8">VA</text><path d="M8 16h10M10 14l-2 2 2 2" stroke="#b8b8b8" fill="none"/></svg></span>${spinDrop('Auto', 46)}</div>
        <div class="ln"><span style="width:21px"><svg width="18" height="18" style="display:block"><text x="9" y="11" text-anchor="middle" font-family="Liberation Sans" font-size="12" font-weight="700" fill="#b8b8b8" text-decoration="underline">VA</text><path d="M0 15.500h18M2 13.500l-2 2 2 2M16 13.500l2 2-2 2" stroke="#b8b8b8" fill="none"/></svg></span>${spinDrop('75', 46)}</div>
      </div>
    </ai-panel>
    <ai-panel h="308" tabs="Layers|Artboards" widths="43,61" noarrow>
      <div class="layers">
        <layer-row name="Layer 1" thumb="layer" eye top></layer-row>
        <layer-row name="&lt;Rectang..." thumb="u" sel></layer-row>
        <layer-row name="&lt;Rectang..." thumb="o"></layer-row>
        <layer-row name="R" thumb="blank"></layer-row>
        <layer-row name="&lt;Path&gt;" thumb="circle"></layer-row>
        <layer-row name="ubuntu" thumb="text"></layer-row>
        <layer-row name="&lt;Path&gt;" thumb="rect" eye></layer-row>
        <layer-row name="&lt;Path&gt;" thumb="rect" eye></layer-row>
      </div>
      <div class="ft" style="margin-top:1px">
        <span style="width:84px">1 Layer</span>
        <span style="margin-left:11px">${svg(16, 14, '<circle cx="9" cy="5" r="4" stroke="#6e6e6e"/><path d="M6 8l-4 5" stroke="#6e6e6e"/>')}</span>
        <span style="margin-left:11px">${svg(14, 14, '<rect x="1.500" y="1.500" width="8" height="8" stroke="#6e6e6e"/><rect x="5" y="5" width="7" height="7" fill="#6e6e6e" stroke="none"/>')}</span>
        <span style="margin-left:10px">${svg(16, 12, '<path d="M1 3h5l-2-2M6 3L4 5" stroke="#7a7a7a"/><rect x="8" y="2" width="8" height="9" fill="#7a7a7a" stroke="none"/>')}</span>
        <span style="margin-left:11px">${svg(14, 12, '<polygon points="1,0 12,0 12,11 5,11 5,6 1,6" fill="#d4d4d4" stroke="none"/>')}</span>
        <span style="margin-left:13px">${svg(12, 14, '<path d="M1 3h10M4 3V1h4v2M2 4v9h8V4M4.500 5v7M7.500 5v7" stroke="#d0d0d0"/>')}</span>
      </div>
    </ai-panel>`;
  }
}

class LayerRow extends Comp {
  render() {
    const has = n => this.hasAttribute(n);
    const thumbs = {
      layer: '<rect x="3" y="3" width="2" height="2" fill="#d05060" stroke="none"/><rect x="10" y="3" width="2" height="2" fill="#d05060" stroke="none"/>',
      u: '<path d="M3.500 0h9v10a4.500 4.500 0 0 1-9 0z" fill="#b5000e" stroke="none"/>',
      o: '<path d="M2 2h12v7a6 6 0 0 1-12 0z" fill="none" stroke="#e8590c" stroke-width="1.600"/>',
      blank: '',
      circle: '<circle cx="8" cy="8" r="7.500" fill="#b5000e" stroke="none"/>',
      text: '<rect x="1" y="6" width="14" height="3" fill="#111" stroke="none"/><path d="M3 6v3M6 6v3M9 6v3M12 6v3" stroke="#fff" stroke-width=".7"/>',
      rect: '<rect x="1" y="0.500" width="14" height="15" rx="3" fill="#b5000e" stroke="none"/>'
    };
    const eye = `<svg width="14" height="10" style="display:block"><path d="M1 5c3-5 9-5 12 0-3 5-9 5-12 0z" fill="#b8b8b8"/><circle cx="7" cy="5" r="2.800" fill="#2f2f2f"/></svg>`;
    return `<style>
      :host{display:grid;grid-template-columns:20px 21px 6px 1fr 35px;height:21.050px;box-sizing:border-box;border-bottom:1px solid #2e2e2e;background:${has('sel') ? '#4f5a6b' : has('top') ? '#4a4a4a' : '#575757'};color:#dcdcdc;font-size:10px;font-weight:600;position:relative}
      .c{border-right:1px solid #2e2e2e;display:flex;align-items:center;justify-content:center}
      .blue{background:#4c7cf3;margin:1px 0 1px 1px;width:4px;border:0}
      .m{display:flex;align-items:center;border-right:1px solid #2e2e2e;border-left:1px solid #2e2e2e}
      .th{width:18px;height:18px;box-sizing:border-box;background:#fff;border:1px solid #000;flex:none}
      .o{display:block;width:10px;height:10px;border-radius:50%;border:1px solid #c4c4c4;box-sizing:border-box;background:#444}
      .cn{position:absolute;right:0;top:0}
    </style>
    <div class="c" style="padding-right:2px">${has('eye') ? eye : ''}</div>
    <div class="c"></div>
    <div class="blue"></div>
    <div class="m" style="padding-left:${has('top') ? '2' : '0'}px">
      ${has('top') ? `<span style="margin:0 8px 0 1px">${tri('d', 9, 6, '#e4e4e4')}</span>` : '<span style="width:40px"></span>'}
      <span class="th">${svg(16, 16, thumbs[this.getAttribute('thumb')])}</span>
      <span style="margin-left:${has('top') ? 5 : 4}px">${this.getAttribute('name').replace(/</g, '&lt;')}</span>
    </div>
    <div class="c" style="border:0;padding-right:15px"><i class="o"></i></div>
    ${has('top') ? `<div class="cn">${svg(5, 5, '<polygon points="0,0 5,0 5,5" fill="#ddd" stroke="none"/>')}</div>` : ''}`;
  }
}

class IconDock extends Comp {
  render() {
    return `<style>
      :host{width:39px;flex:none;display:flex;flex-direction:column;background:#4a4a4a;color:#c8c8c8;border-right:1px solid #2a2a2a}
      .hd{height:12px;background:#3d3d3d;display:flex;justify-content:flex-end;align-items:center;gap:1px;padding-right:3px;flex:none}
      .g{border:1px solid #2a2a2a;border-width:0 0 1px 0;display:flex;flex-direction:column;align-items:center;padding-top:4px;height:96px;box-sizing:border-box;gap:10px}
      .grip{height:4px;width:20px;background:repeating-linear-gradient(90deg,#222 0 1px,transparent 1px 2px);margin-bottom:-1px}
    </style>
    <div class="hd">${tri('l', 4, 5, '#bdbdbd')}${tri('l', 4, 5, '#bdbdbd')}</div>
    <div class="g"><div class="grip"></div>
      ${svg(18, 14, '<rect x="1.500" y="1.500" width="15" height="11" stroke="#bbb"/><path d="M6.500 1.500v11M11.500 1.500v11M1.500 7h15" stroke="#bbb"/>')}
      ${svg(18, 20, '<rect x="5" y="10" width="8" height="9" fill="#b8b8b8" stroke="none"/><path d="M6 10L3 2M9 10V1M12 10l4-7" stroke="#c8c8c8" stroke-width="2"/>')}
      ${svg(18, 18, '<circle cx="9" cy="5" r="4" fill="#bbb" stroke="none"/><circle cx="5" cy="10" r="4" fill="#bbb" stroke="none"/><circle cx="13" cy="10" r="4" fill="#bbb" stroke="none"/><path d="M9 8v6M6 16h6" stroke="#bbb" stroke-width="2"/>')}
    </div>
    <div class="g"><div class="grip"></div>
      ${svg(22, 16, '<path d="M6 14c-6 0-6-7-1-8 1-5 8-5 10-1 6-1 8 9 1 9z" stroke="#bbb" stroke-width="1.600"/><path d="M7 10c3-4 5 3 8 0" stroke="#bbb" stroke-width="1.300"/>')}
      ${svg(20, 20, '<circle cx="10" cy="10" r="6" fill="#bbb" stroke="none"/><circle cx="10" cy="10" r="8.500" stroke="#bbb" stroke-dasharray="2 1.500"/>')}
      ${svg(18, 18, '<path d="M5 6V1.500h12v13H9" stroke="#c4c4c4"/><rect x="1.500" y="9.500" width="5" height="5" stroke="#c4c4c4"/><rect x="5" y="12" width="4" height="4" fill="#4a4a4a" stroke="#c4c4c4"/>')}
    </div>`;
  }
}

class TaskIcon extends Comp {
  render() {
    const t = this.getAttribute('box');
    const c = this.getAttribute('c');
    return `<style>
      :host{width:49px;height:40px;flex:none;display:flex;align-items:center;justify-content:center;position:relative;box-sizing:border-box}
      :host([active]){background:#333537}
      :host([on])::after,:host([active])::after{content:"";position:absolute;left:4px;right:4px;bottom:0;height:2px;background:#76b9ed}
      :host([active])::after{left:0;right:0}
      .b{width:21px;height:21px;box-sizing:border-box;border:2px solid ${c};color:${c};font:500 13px/17px "Open Sans",sans-serif;text-align:center;background:rgba(0,0,0,.2)}
    </style>${t ? `<div class="b">${t}</div>` : '<slot></slot>'}`;
  }
}

class TaskBar extends Comp {
  render() {
    return `<style>
      :host{height:40px;flex:none;display:flex;background:#02040a;color:#fff;position:relative;font-family:"Open Sans",sans-serif}
      .start{width:48px;display:flex;align-items:center;justify-content:center}
      .search{width:344px;background:#f2f2f2;color:#333;display:flex;align-items:center;font-size:14px;flex:none}
      .ring{width:20px;height:20px;box-sizing:border-box;border:3px solid #111;border-radius:50%;margin:0 10px 0 10px;box-shadow:0 0 2px #555}
      .tray{margin-left:auto;display:flex;align-items:center}
      .tray>div{display:flex;align-items:center;justify-content:center;flex:none}
      .clock{width:70px;flex-direction:column;font-size:12px;line-height:19px;color:#eee;text-align:center}
    </style>
    <div class="start">${svg(18, 18, '<polygon points="0,3 7,2 7,8.500 0,8.500" fill="#fff" stroke="none"/><polygon points="8,2 17,0.500 17,8.500 8,8.500" fill="#fff" stroke="none"/><polygon points="0,9.500 7,9.500 7,15.500 0,15" fill="#fff" stroke="none"/><polygon points="8,9.500 17,9.500 17,17 8,16" fill="#fff" stroke="none"/>')}</div>
    <div class="search">
      <div class="ring"></div><span style="flex:1">Type here to search</span>
      <span style="margin-right:13px">${svg(14, 20, '<rect x="4" y="1.500" width="6" height="11" rx="3" stroke="#333"/><path d="M1.500 8c0 7 11 7 11 0M7 15v4M4 19h6" stroke="#333"/>')}</span>
    </div>
    <task-icon>${svg(22, 16, '<rect x="5.500" y="1" width="11" height="14" stroke="#fff" stroke-width="1.300"/><path d="M2 3H0.700v10H2M20 3h1.300v10H20" stroke="#fff"/>')}</task-icon>
    <task-icon on>${svg(24, 24, '<path d="M4 14C4 5 10 2 14 2c5 0 8 4 8 9H8c0 6 7 8 12 4v5c-7 3-15 0-15-6" fill="none" stroke="#0078d7" stroke-width="4"/>')}</task-icon>
    <task-icon on>${svg(24, 22, '<path d="M1 4h8l2 2h12v15H1z" fill="#f6d56b" stroke="none"/><path d="M1 9h22v12H1z" fill="#fbe69a" stroke="none"/><path d="M7 21v-5l5-4 5 4v5z" fill="#2fa8d8" stroke="none"/><rect x="9" y="17" width="6" height="4" fill="#0b6aa4" stroke="none"/>')}</task-icon>
    <task-icon>${svg(22, 24, '<path d="M7 7V4a4 4 0 0 1 8 0v3" stroke="#eee" stroke-width="1.400"/><rect x="1" y="6" width="20" height="17" fill="#fff" stroke="none"/><rect x="6" y="10" width="4.500" height="4.500" fill="#f25022" stroke="none"/><rect x="11.500" y="10" width="4.500" height="4.500" fill="#7fba00" stroke="none"/><rect x="6" y="15.500" width="4.500" height="4.500" fill="#00a4ef" stroke="none"/><rect x="11.500" y="15.500" width="4.500" height="4.500" fill="#ffb900" stroke="none"/>')}</task-icon>
    <task-icon on>${svg(24, 24, '<circle cx="12" cy="12" r="11" fill="#db4437" stroke="none"/><path d="M12 12L2.500 17.500A11 11 0 0 0 12 23z" fill="#0f9d58" stroke="none"/><path d="M12 23a11 11 0 0 0 11-11 11 11 0 0 0-1.500-5.500H12z" fill="#fbc02d" stroke="none"/><path d="M2.500 6.500L7 14.500 12 23l-3 0-6.500-6A11 11 0 0 1 2.500 6.500z" fill="#0f9d58" stroke="none"/><circle cx="12" cy="12" r="5.500" fill="#fff" stroke="none"/><circle cx="12" cy="12" r="4.300" fill="#4285f4" stroke="none"/>')}</task-icon>
    <task-icon on>${svg(20, 24, '<rect x="2" y="1" width="16" height="22" fill="#cfd9e4" stroke="#9db0c4"/><path d="M9 5h7M9 8h7M9 16h7M4 19h12" stroke="#8ca0b4"/><text x="3" y="14" font-family="Liberation Sans" font-size="11" fill="#f08a24" stroke="none">A</text>')}</task-icon>
    <task-icon on box="Ps" c="#00c8ff"></task-icon>
    <task-icon active box="Ai" c="#ff7c00"></task-icon>
    <task-icon box="Id" c="#ff3d8b"></task-icon>
    <task-icon box="Ae" c="#b77cff"></task-icon>
    <task-icon on box="Br" c="#f0a000"></task-icon>
    <task-icon>${svg(24, 24, '<circle cx="12" cy="12" r="11" fill="#e8e8e8" stroke="none"/><circle cx="12.500" cy="11" r="8.500" fill="#14184a" stroke="none"/><path d="M9 14a7 7 0 0 1 8-8 6 6 0 0 0-1 9z" fill="#6a78d8" stroke="none"/>')}</task-icon>
    <task-icon box="Lr" c="#b4d8ec"></task-icon>
    <task-icon>${svg(24, 24, '<circle cx="12" cy="12" r="11.500" fill="#62a420" stroke="none"/><path d="M1 13l12-9 3 3-12 13z" fill="#fff" stroke="none"/><path d="M14 4c3 3 5 7 5 11" stroke="#cbe39a"/><path d="M11 3c3 4 5 8 5 13" stroke="#cbe39a"/>')}</task-icon>
    <task-icon>${svg(26, 24, '<rect x="1" y="2" width="10" height="21" rx="1" stroke="#e8305c" stroke-width="1.300"/><path d="M4 5h4M6 19.500v1" stroke="#e8305c"/><path d="M14 7a5 5 0 0 1 0 11" stroke="#e8305c" stroke-width="1.200"/><path d="M15 1v3M21 5l-2 2M25 12h-4M21 20l-2-2M15 24v-3" stroke="#e8305c" stroke-width="1.200"/>')}</task-icon>
    <task-icon>${svg(24, 24, '<path d="M4 2l14-1 3 3v18l-17 1z" fill="#e8eef5" stroke="none"/><path d="M9 7h10M15 11h4M15 15h4M8 20h11" stroke="#8aa4c6"/><rect x="2" y="5" width="12" height="12" fill="#2b5ea8" stroke="none"/><text x="8" y="15" text-anchor="middle" font-family="Liberation Sans" font-weight="700" font-size="11" fill="#fff" stroke="none">W</text>')}</task-icon>
    <task-icon on>${svg(26, 24, '<rect x="6" y="2" width="18" height="13" fill="#3fa7ee" stroke="#9cd4f7"/><circle cx="7" cy="15" r="5" fill="#9dc2d8" stroke="#6a8aa0"/><path d="M4 19l-3 4" stroke="#6a8aa0" stroke-width="2"/>')}</task-icon>
    <div class="tray">
      <div style="width:28px;margin-right:12px">${svg(18, 18, '<circle cx="6" cy="9" r="3" stroke="#fff"/><circle cx="12" cy="4" r="3" stroke="#fff"/><path d="M1 17c0-4 2-5 5-5s5 1 5 5M11 8c3 0 5 1 5 5" stroke="#fff"/>')}</div>
      <div style="width:24px">${svg(14, 8, '<path d="M1 7l6-6 6 6" stroke="#fff" stroke-width="1.200"/>')}</div>
      <div style="width:24px">${svg(18, 12, '<path d="M0 2v4h2M0 9h2M3 1h3v9H3z" stroke="#fff"/><rect x="6.500" y="2.500" width="11" height="7" stroke="#fff"/><rect x="8" y="4" width="7" height="4" fill="#fff" stroke="none"/>')}</div>
      <div style="width:24px">${svg(17, 14, '<path d="M1 5h2.500L8 1.500v11L3.500 9H1z" stroke="#fff"/><path d="M10 4.500a4 4 0 0 1 0 5M12 3a6 6 0 0 1 0 8M14 1.500a8 8 0 0 1 0 11" stroke="#fff"/>')}</div>
      <div style="width:22px">${svg(16, 14, '<path d="M6 8a8 8 0 0 1 9-4M8 10a5 5 0 0 1 6-2" stroke="#777"/><circle cx="14" cy="12" r="1" fill="#777" stroke="none"/><circle cx="5" cy="10" r="4" fill="#e81123" stroke="none"/><path d="M3.500 8.500l3 3M6.500 8.500l-3 3" stroke="#fff"/>')}</div>
      <div class="clock"><span>6:46 PM</span><span>3/1/2018</span></div>
      <div style="width:34px">${svg(18, 17, '<path d="M1.500 1.500h15v11h-5l-2.500 3-2.500-3h-5z" stroke="#fff"/>')}</div>
      <div style="width:16px"></div>
    </div>`;
  }
}

customElements.define('desk-top', DeskTop);
customElements.define('browser-behind', BrowserBehind);
customElements.define('ai-app', AiApp);
customElements.define('menu-bar', MenuBar);
customElements.define('ai-field', AiField);
customElements.define('control-bar', ControlBar);
customElements.define('tool-btn', ToolBtn);
customElements.define('tool-dock', ToolDock);
customElements.define('doc-area', DocArea);
customElements.define('art-canvas', ArtCanvas);
customElements.define('mag-window', MagWindow);
customElements.define('ai-panel', AiPanel);
customElements.define('align-row', AlignRow);
customElements.define('panel-dock', PanelDock);
customElements.define('layer-row', LayerRow);
customElements.define('icon-dock', IconDock);
customElements.define('task-icon', TaskIcon);
customElements.define('task-bar', TaskBar);
</script>
</body>
</html>
